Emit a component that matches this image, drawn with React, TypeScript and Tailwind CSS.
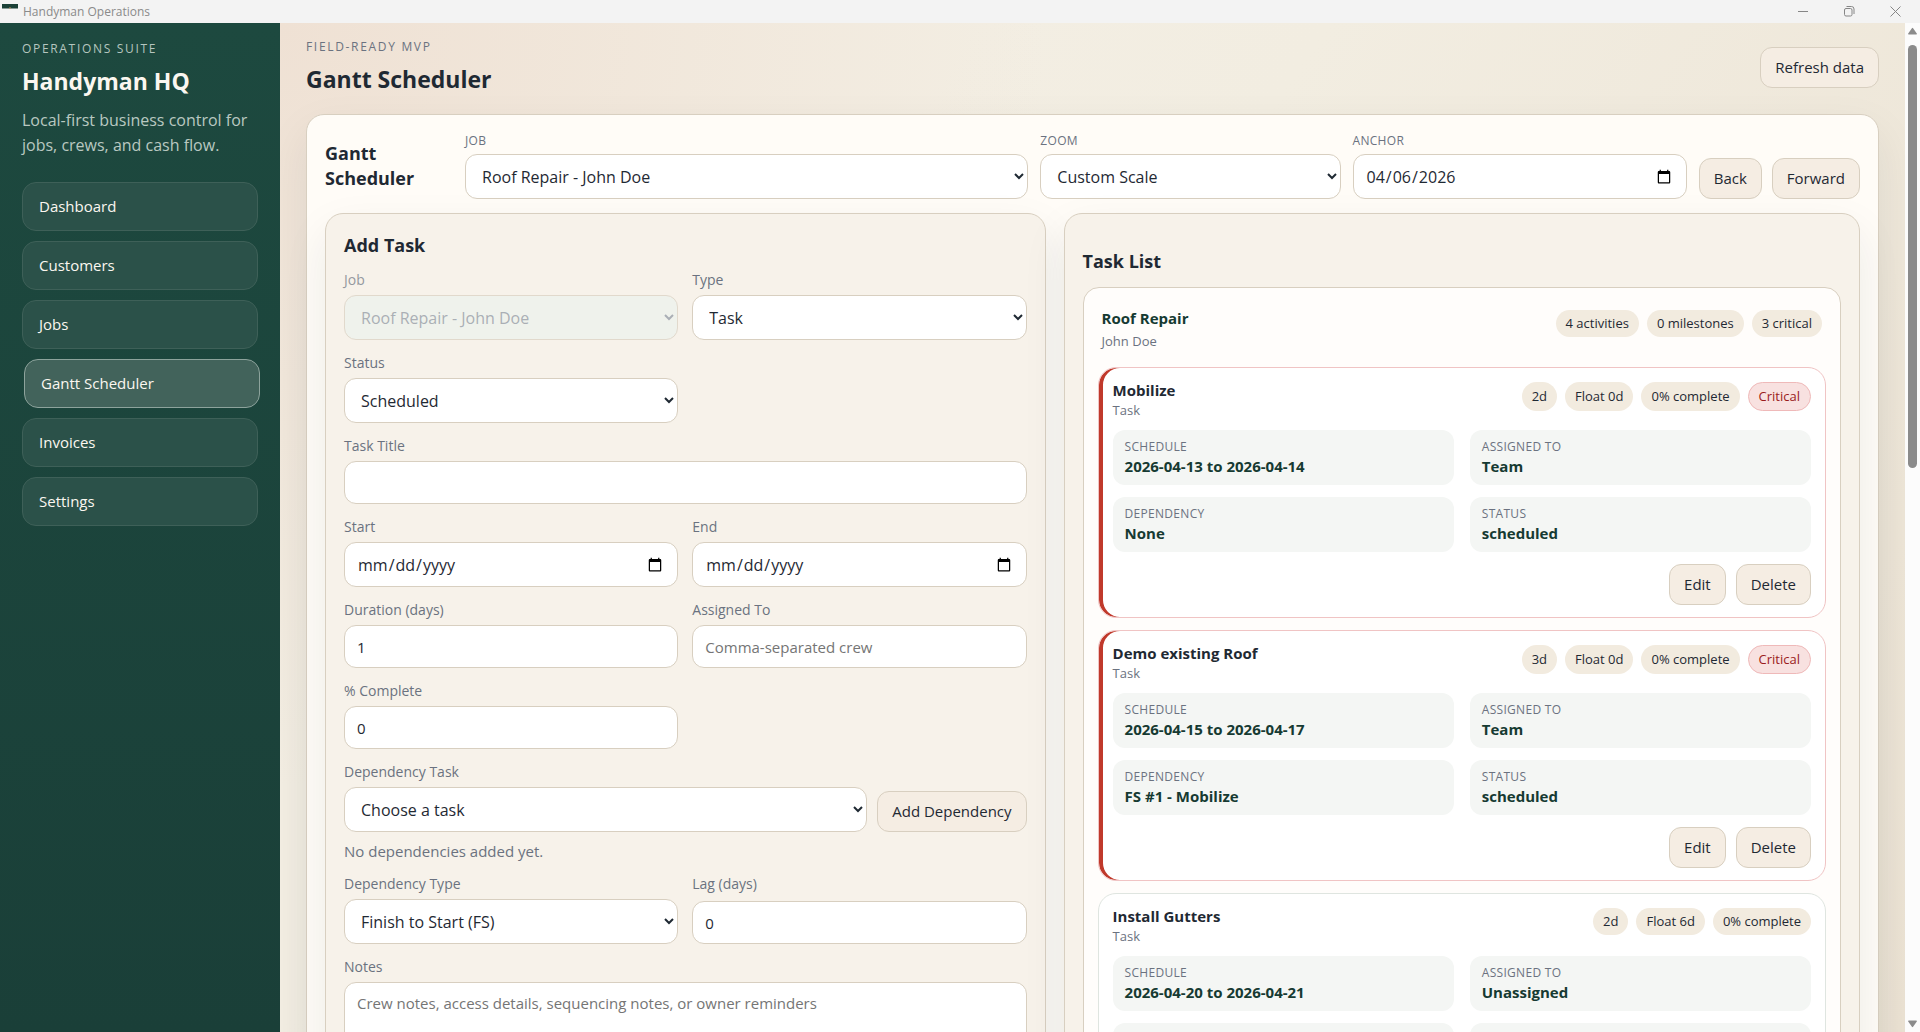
import React from "react";
import clsx from "clsx";

const navItems = ["Dashboard", "Customers", "Jobs", "Gantt Scheduler", "Invoices", "Settings"];

type Task = {
    title: string;
    duration: string;
    float: string;
    schedule: string;
    assigned: string;
    dependency: string;
    critical: boolean;
};

const tasks: Task[] = [
    { title: "Mobilize", duration: "2d", float: "Float 0d", schedule: "2026-04-13 to 2026-04-14", assigned: "Team", dependency: "None", critical: true },
    { title: "Demo existing Roof", duration: "3d", float: "Float 0d", schedule: "2026-04-15 to 2026-04-17", assigned: "Team", dependency: "FS #1 - Mobilize", critical: true },
    { title: "Install Gutters", duration: "2d", float: "Float 6d", schedule: "2026-04-20 to 2026-04-21", assigned: "Unassigned", dependency: "None", critical: false },
];

const fieldClass =
    "block w-full min-w-0 rounded-xl border border-[#d8cfc0] px-3 text-[#1f2933] placeholder:text-[#757575]";
const inputClass = clsx(fieldClass, "h-[43px] bg-white text-[15px]");
const selectClass = clsx(fieldClass, "h-[45px] bg-white text-base disabled:bg-[#edf3ee] disabled:text-[#8a93a0]");
const cardShadow = "shadow-[0_18px_45px_rgba(31,41,51,0.08)]";

const Button = ({ children }: { children: React.ReactNode }) => (
    <button
        type="button"
        className="h-[41px] shrink-0 whitespace-nowrap rounded-xl border border-[#d8cfc0] bg-[#f5ede3] px-[14px] text-[15px] text-[#1f2933]"
    >
        {children}
    </button>
);

const Field = ({ label, className, children }: { label: string; className?: string; children: React.ReactNode }) => (
    <label className={clsx("flex flex-col justify-between gap-[5px]", className)}>
        <span className="text-sm leading-5 text-[#6b7280]">{label}</span>
        {children}
    </label>
);

const ToolbarField = ({ label, children }: { label: string; children: React.ReactNode }) => (
    <label className="flex min-w-0 flex-col gap-[5px]">
        <span className="text-xs leading-4 tracking-wide text-[#6b7280] uppercase">{label}</span>
        {children}
    </label>
);

const Pill = ({ children, critical }: { children: React.ReactNode; critical?: boolean }) => (
    <span
        className={clsx(
            "flex items-center rounded-full px-[10px] py-1 text-[13px] leading-[19px] whitespace-nowrap",
            critical ? "border border-[#efb9b9] bg-[#f8e1e0] text-[#9b1c1c]" : "bg-[#f2ebdf] text-[#1f2933]"
        )}
    >
        {children}
    </span>
);

const Detail = ({ label, value }: { label: string; value: string }) => (
    <div className="rounded-xl bg-[#f4f6f4] px-3 py-2">
        <div className="text-xs leading-[18px] tracking-wide text-[#6b7280] uppercase">{label}</div>
        <div className="text-[15px] leading-[21px] font-bold text-[#163a32]">{value}</div>
    </div>
);

const TaskCard = ({ task }: { task: Task }) => (
    <article
        className={clsx(
            "rounded-[18px] border bg-white px-[14px] pt-[13px] pb-3",
            task.critical ? "border-[#f0c4c4] shadow-[inset_4px_0_0_#c0392b]" : "border-[#dfe5e0]"
        )}
    >
        <div className="flex items-start justify-between">
            <div>
                <h4 className="text-[15px] leading-[19px] font-bold text-[#1f2933]">{task.title}</h4>
                <p className="text-[13px] leading-5 text-[#6b7280]">Task</p>
            </div>
            <div className="flex gap-2 pt-px">
                <Pill>{task.duration}</Pill>
                <Pill>{task.float}</Pill>
                <Pill>0% complete</Pill>
                {task.critical && <Pill critical>Critical</Pill>}
            </div>
        </div>
        <div className="mt-[10px] grid grid-cols-2 gap-x-4 gap-y-3">
            <Detail label="Schedule" value={task.schedule} />
            <Detail label="Assigned To" value={task.assigned} />
            <Detail label="Dependency" value={task.dependency} />
            <Detail label="Status" value="scheduled" />
        </div>
        <div className="mt-3 flex justify-end gap-[10px]">
            <Button>Edit</Button>
            <Button>Delete</Button>
        </div>
    </article>
);

const TitleBar = () => (
    <header className="flex h-[23px] shrink-0 items-center justify-between bg-[#f3f3f3]">
        <div className="flex h-full items-center gap-[5px] pl-[2px]">
            <svg width="16" height="16" viewBox="0 0 16 16" aria-hidden="true">
                <path d="M0 -0.5h16v5H0z" fill="#1b4037" />
                <path d="M7 3.5h2v1H7z" fill="#b98f5f" />
            </svg>
            <span className="text-xs text-[#8a8a8a]">Handyman Operations</span>
        </div>
        <div className="flex gap-[35px] pr-[19px] text-[#868686]">
            <button type="button" aria-label="Minimize" className="block">
                <svg width="11" height="11" viewBox="0 0 11 11" stroke="currentColor" fill="none">
                    <path d="M0 5.5h10" />
                </svg>
            </button>
            <button type="button" aria-label="Restore" className="block">
                <svg width="11" height="11" viewBox="0 0 11 11" stroke="currentColor" fill="none">
                    <rect x="0.5" y="2.5" width="7.5" height="7.5" rx="1.5" />
                    <path d="M2.5 0.5h5a2.5 2.5 0 0 1 2.5 2.5v5" />
                </svg>
            </button>
            <button type="button" aria-label="Close" className="block">
                <svg width="11" height="11" viewBox="0 0 11 11" stroke="currentColor" fill="none">
                    <path d="M0.5 0.5l10 10M10.5 0.5l-10 10" />
                </svg>
            </button>
        </div>
    </header>
);

const Sidebar = () => (
    <aside className="w-[280px] shrink-0 bg-gradient-to-b from-[#1d493f] to-[#1a3f38] px-[22px] pt-4">
        <p className="text-xs leading-5 tracking-[0.14em] text-[#b5c6bf] uppercase">Operations Suite</p>
        <h1 className="mt-[3px] text-[23px] leading-[38px] font-bold text-[#fbf7f0]">Handyman HQ</h1>
        <p className="mt-2 text-base leading-[25px] text-[#b9c8c1]">Local-first business control for jobs, crews, and cash flow.</p>
        <nav className="mt-6 flex flex-col gap-[10px]">
            {navItems.map((item) => (
                <a
                    key={item}
                    href="#"
                    className={clsx(
                        "flex h-[49px] items-center rounded-[14px] border px-4 text-[15px] text-[#fbf7f0]",
                        item === "Gantt Scheduler"
                            ? "translate-x-[2px] border-[#8da39c] bg-[#42635b]"
                            : "border-[#3e6058] bg-[#2b5149]"
                    )}
                >
                    {item}
                </a>
            ))}
        </nav>
    </aside>
);

const TaskForm = () => (
    <section className={clsx("rounded-[18px] border border-[#d8cfc0] bg-[#f7f2ea] p-[18px]", cardShadow)}>
        <h3 className="text-lg leading-[27px] font-bold">Add Task</h3>
        <form className="mt-[11px] grid grid-cols-2 gap-x-[14px] gap-y-[13px]">
            <Field label="Job" className="opacity-70">
                <select disabled className={selectClass}>
                    <option>Roof Repair - John Doe</option>
                </select>
            </Field>
            <Field label="Type">
                <select className={selectClass}>
                    <option>Task</option>
                    <option>Milestone</option>
                </select>
            </Field>
            <Field label="Status">
                <select className={selectClass}>
                    <option>Scheduled</option>
                </select>
            </Field>
            <Field label="Task Title" className="col-span-2">
                <input type="text" className={inputClass} />
            </Field>
            <Field label="Start">
                <input type="date" className={selectClass} />
            </Field>
            <Field label="End">
                <input type="date" className={selectClass} />
            </Field>
            <Field label="Duration (days)">
                <input type="text" defaultValue="1" className={inputClass} />
            </Field>
            <Field label="Assigned To">
                <input type="text" placeholder="Comma-separated crew" className={inputClass} />
            </Field>
            <Field label="% Complete">
                <input type="text" defaultValue="0" className={inputClass} />
            </Field>
            <div className="col-span-2">
                <div className="flex items-end gap-[10px]">
                    <Field label="Dependency Task" className="min-w-0 flex-1">
                        <select className={selectClass}>
                            <option>Choose a task</option>
                        </select>
                    </Field>
                    <Button>Add Dependency</Button>
                </div>
                <p className="mt-[9px] text-[15px] leading-5 text-[#6b7280]">No dependencies added yet.</p>
            </div>
            <Field label="Dependency Type">
                <select className={selectClass}>
                    <option>Finish to Start (FS)</option>
                </select>
            </Field>
            <Field label="Lag (days)">
                <input type="text" defaultValue="0" className={inputClass} />
            </Field>
            <Field label="Notes" className="col-span-2">
                <textarea
                    rows={4}
                    placeholder="Crew notes, access details, sequencing notes, or owner reminders"
                    className={clsx(fieldClass, "resize-none bg-white py-2 text-[15px] leading-6")}
                />
            </Field>
        </form>
    </section>
);

const TaskList = () => (
    <section className={clsx("rounded-[18px] border border-[#d8cfc0] bg-[#f7f2ea] p-[18px]", cardShadow)}>
        <h3 className="pt-[17px] text-lg leading-[25px] font-bold">Task List</h3>
        <div className="mt-[13px] rounded-2xl border border-[#d8cfc0] bg-[#fffdfb] px-[14px] pt-[18px] pb-4">
            <div className="flex items-start justify-between px-1">
                <div>
                    <h4 className="text-[15px] leading-[25px] font-bold text-[#163a32]">Roof Repair</h4>
                    <p className="text-[13px] leading-5 text-[#6b7280]">John Doe</p>
                </div>
                <div className="flex gap-2 pt-1">
                    <Pill>4 activities</Pill>
                    <Pill>0 milestones</Pill>
                    <Pill>3 critical</Pill>
                </div>
            </div>
            <div className="mt-4 flex flex-col gap-3">
                {tasks.map((task) => (
                    <TaskCard key={task.title} task={task} />
                ))}
            </div>
        </div>
    </section>
);

const ScrollBar = () => (
    <div aria-hidden="true" className="flex w-[15px] shrink-0 flex-col items-center bg-[#fcfcfc] py-1 text-[#8b8b8b]">
        <svg width="9" height="8" viewBox="0 0 9 8" fill="currentColor">
            <path d="M3.9 1.2q0.6-0.9 1.2 0L8.8 6.6q0.4 0.9-0.5 0.9H0.7q-0.9 0-0.5-0.9z" />
        </svg>
        <div className="mt-[10px] flex-1">
            <div className="h-[43.4%] w-[9px] rounded-full bg-[#8b8b8b]" />
        </div>
        <svg width="9" height="8" viewBox="0 0 9 8" fill="currentColor" className="rotate-180">
            <path d="M3.9 1.2q0.6-0.9 1.2 0L8.8 6.6q0.4 0.9-0.5 0.9H0.7q-0.9 0-0.5-0.9z" />
        </svg>
    </div>
);

export default function App() {
    return (
        <div className="flex h-screen flex-col overflow-hidden font-['Open_Sans','Noto_Sans',sans-serif] text-[#1f2933]">
            <TitleBar />
            <div className="flex min-h-0 flex-1">
                <Sidebar />
                <main className="min-w-0 flex-1 overflow-y-auto bg-[radial-gradient(circle_at_top_left,#efe1d4_0%,transparent_40%),linear-gradient(125deg,#f3eee3_30%,#f2ede1_45%,#ebe2d3_100%)] px-[26px] pt-[14px] pb-6 [scrollbar-width:none]">
                    <div className="flex items-center justify-between">
                        <div>
                            <p className="text-xs leading-5 tracking-[0.14em] text-[#6b7280] uppercase">Field-Ready MVP</p>
                            <h2 className="mt-[3px] text-[23px] leading-[38px] font-bold">Gantt Scheduler</h2>
                        </div>
                        <Button>Refresh data</Button>
                    </div>
                    <div className={clsx("mt-4 rounded-[18px] border border-[#d8cfc0] bg-[#fffcf7] p-[18px]", cardShadow)}>
                        <div className="flex items-end gap-3">
                            <h3 className="w-32 shrink-0 self-center text-lg leading-[25px] font-bold">
                                Gantt Scheduler
                            </h3>
                            <div className="grid flex-1 grid-cols-[563fr_300fr_334fr] gap-3">
                                <ToolbarField label="Job">
                                    <select className={selectClass}>
                                        <option>Roof Repair - John Doe</option>
                                    </select>
                                </ToolbarField>
                                <ToolbarField label="Zoom">
                                    <select className={selectClass}>
                                        <option>Custom Scale</option>
                                    </select>
                                </ToolbarField>
                                <ToolbarField label="Anchor">
                                    <input type="date" defaultValue="2026-04-06" className={selectClass} />
                                </ToolbarField>
                            </div>
                            <div className="flex gap-[10px]">
                                <Button>Back</Button>
                                <Button>Forward</Button>
                            </div>
                        </div>
                        <div className="mt-[14px] grid grid-cols-[0.95fr_1.05fr] items-start gap-[18px]">
                            <TaskForm />
                            <TaskList />
                        </div>
                    </div>
                </main>
                <ScrollBar />
            </div>
        </div>
    );
}
